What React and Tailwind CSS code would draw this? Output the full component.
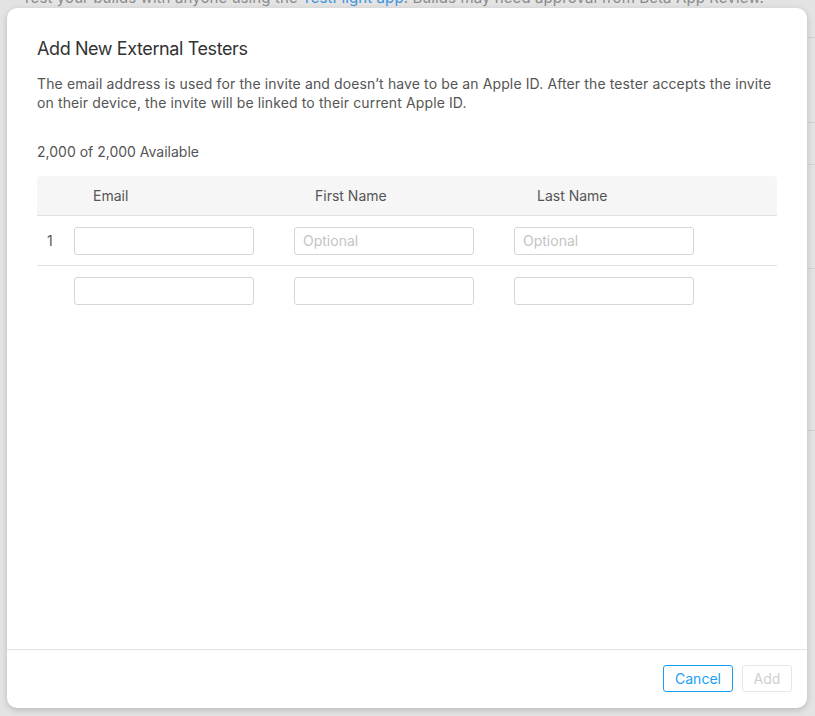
import React from "react";

const font = { fontFamily: "Inter, 'Noto Sans', sans-serif" };

function Input({ placeholder }) {
  return (
    <input
      placeholder={placeholder}
      className="w-[180px] h-[28px] rounded-[3px] border border-[#d6d6d6] bg-white px-[8px] text-[14px] text-[#333] placeholder:text-[#c4c4c4] outline-none"
    />
  );
}

export default function App() {
  return (
    <div
      className="relative w-[815px] h-[716px] overflow-hidden bg-[#e3e3e3]"
      style={font}
    >
      {/* background page */}
      <div className="flex flex-col">
        <div className="h-[8px] pl-[22px] text-[15px] leading-[8px] text-[#8a8a8a] overflow-hidden tracking-[0.1px]">
          <div className="-mt-[6px]">
            Test your builds with anyone using the{" "}
            <span className="text-[#3a95dc]">TestFlight app</span>. Builds may need approval from Beta App Review.
          </div>
        </div>
        <div className="ml-auto w-[7px] flex flex-col">
          <div className="h-[29px]" />
          <div className="h-[85px] border-t border-[#d2d2d2]" />
          <div className="h-[42px] border-t border-[#d2d2d2]" />
          <div className="h-[104px] border-t border-[#d2d2d2]" />
          <div className="h-[162px] border-t border-[#d2d2d2]" />
          <div className="h-[100px] border-t border-[#d2d2d2]" />
        </div>
      </div>

      {/* modal */}
      <div className="absolute left-[7px] top-[8px] w-[800px] h-[700px] flex flex-col rounded-[10px] bg-white shadow-[0_2px_6px_rgba(0,0,0,0.18)]">
        <div className="flex-1 flex flex-col px-[30px] pt-[29px]">
          <h1 className="text-[18px] leading-[24px] text-[#333] font-normal tracking-[-0.4px]">
            Add New External Testers
          </h1>
          <p className="mt-[13px] text-[14px] leading-[19px] text-[#555] tracking-[0.12px]">
            The email address is used for the invite and doesn’t have to be an Apple ID. After the tester accepts the invite on their device, the invite will be linked to their current Apple ID.
          </p>
          <div className="mt-[30px] text-[14px] leading-[20px] text-[#555]">
            2,000 of 2,000 Available
          </div>
          <div className="mt-[14px] flex flex-col">
            <div className="flex h-[40px] items-center rounded-t-[4px] bg-[#f6f6f6] border-b border-[#e1e1e1] text-[14px] text-[#555]">
              <div className="w-[37px]" />
              <div className="w-[220px] pl-[19px]">Email</div>
              <div className="w-[220px] pl-[21px]">First Name</div>
              <div className="w-[220px] pl-[23px]">Last Name</div>
            </div>
            <div className="flex h-[50px] items-center border-b border-[#e1e1e1] text-[14px] text-[#555]">
              <div className="w-[37px] pl-[10px]">1</div>
              <div className="w-[220px]"><Input /></div>
              <div className="w-[220px]"><Input placeholder="Optional" /></div>
              <div className="w-[220px]"><Input placeholder="Optional" /></div>
            </div>
            <div className="flex h-[50px] items-center text-[14px] text-[#555]">
              <div className="w-[37px]" />
              <div className="w-[220px]"><Input /></div>
              <div className="w-[220px]"><Input /></div>
              <div className="w-[220px]"><Input /></div>
            </div>
          </div>
        </div>
        <div className="h-[59px] border-t border-[#e3e3e3] flex items-start justify-end gap-[9px] pt-[15px] pr-[15px]">
          <button className="h-[27px] w-[70px] rounded-[3px] border border-[#1a9df5] text-[14px] text-[#1a9df5] bg-white">
            Cancel
          </button>
          <button className="h-[27px] w-[50px] rounded-[3px] border border-[#e6e6e6] text-[14px] text-[#cfcfcf] bg-white">
            Add
          </button>
        </div>
      </div>
    </div>
  );
}
